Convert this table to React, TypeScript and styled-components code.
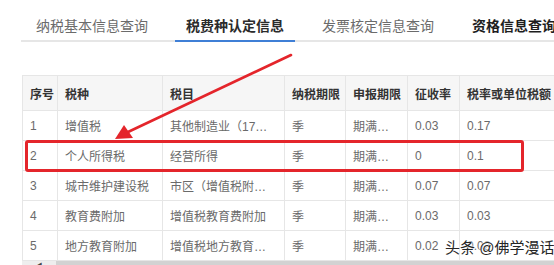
import React from 'react';
import styled, { createGlobalStyle } from 'styled-components';

const GlobalStyle = createGlobalStyle`
    html, body {
        margin: 0;
        padding: 0;
        background: #fff;
    }
    body {
        font-family: "Liberation Sans", "Noto Sans CJK SC", sans-serif;
        overflow: hidden;
    }
`;

interface TaxRow {
    no: string;
    kind: string;
    item: string;
    term: string;
    period: string;
    rate: string;
    amount: string;
}

const tabs = [
    { label: '纳税基本信息查询', weight: 'normal' as const },
    { label: '税费种认定信息', weight: 'active' as const },
    { label: '发票核定信息查询', weight: 'normal' as const },
    { label: '资格信息查询', weight: 'strong' as const },
];

const columns = [
    { title: '序号', width: 35 },
    { title: '税种', width: 105 },
    { title: '税目', width: 122 },
    { title: '纳税期限', width: 61 },
    { title: '申报期限', width: 62 },
    { title: '征收率', width: 52 },
    { title: '税率或单位税额', width: 112 },
];

const rows: TaxRow[] = [
    { no: '1', kind: '增值税', item: '其他制造业（17…', term: '季', period: '期满…', rate: '0.03', amount: '0.17' },
    { no: '2', kind: '个人所得税', item: '经营所得', term: '季', period: '期满…', rate: '0', amount: '0.1' },
    { no: '3', kind: '城市维护建设税', item: '市区（增值税附…', term: '季', period: '期满…', rate: '0.07', amount: '0.07' },
    { no: '4', kind: '教育费附加', item: '增值税教育费附加', term: '季', period: '期满…', rate: '0.03', amount: '0.03' },
    { no: '5', kind: '地方教育附加', item: '增值税地方教育…', term: '季', period: '期满…', rate: '0.02', amount: '0.02' },
];

const Page = styled.div`
    position: relative;
    width: 554px;
    height: 265px;
    overflow: hidden;
`;

const TabBar = styled.div`
    display: flex;
    gap: 8px;
    margin-left: 21px;
    height: 40px;
    border-bottom: 2px solid #e6e6e6;
`;

const Tab = styled.div<{ $weight: 'normal' | 'active' | 'strong' }>`
    position: relative;
    padding: 18px 15px 6px;
    font-size: 14px;
    line-height: 16px;
    white-space: nowrap;
    font-weight: ${p => (p.$weight === 'normal' ? 400 : 700)};
    color: ${p => (p.$weight === 'normal' ? '#6b6b6b' : p.$weight === 'active' ? '#2b2b2b' : '#1e1e1e')};

    &::after {
        display: ${p => (p.$weight === 'active' ? 'block' : 'none')};
        content: '';
        position: absolute;
        left: 4px;
        right: 4px;
        bottom: -2px;
        height: 2px;
        background: #3f7fd6;
    }
`;

const TableWrap = styled.div`
    margin: 33px 0 0 22px;
    width: 532px;
    overflow: hidden;
`;

const Table = styled.table`
    table-layout: fixed;
    border-collapse: collapse;
    width: 549px;
    font-size: 12px;
`;

const HeadCell = styled.th`
    height: 34px;
    padding: 0 0 0 7px;
    text-align: left;
    font-weight: 700;
    color: #333;
    background: #f6f6f6;
    border: 1px solid #e6e6e6;
    white-space: nowrap;
    overflow: hidden;
`;

const Cell = styled.td`
    height: 29px;
    padding: 0 0 0 7px;
    color: #6a6a6a;
    border: 1px solid #e6e6e6;
    white-space: nowrap;
    overflow: hidden;
`;

const ScrollTrack = styled.div`
    display: flex;
    align-items: center;
    margin-left: 22px;
    height: 10px;
    background: #eeeeee;
`;

const ScrollArrow = styled.span`
    width: 34px;
    font-size: 7px;
    color: #444;
    text-align: center;
    line-height: 10px;
`;

const ScrollThumb = styled.div`
    flex: 1;
    height: 10px;
    background: #d2d2d2;
`;

const Highlight = styled.div`
    position: absolute;
    left: 25px;
    top: 140px;
    width: 493px;
    height: 26px;
    border: 3px solid #e4252b;
    border-radius: 3px;
`;

const ArrowLayer = styled.svg`
    position: absolute;
    left: 0;
    top: 0;
    pointer-events: none;
`;

const Watermark = styled.div`
    position: absolute;
    left: 445px;
    top: 238px;
    font-size: 15px;
    line-height: 20px;
    color: #262626;
    white-space: nowrap;
    text-shadow: 0 0 2px #fff, 0 0 2px #fff, 0 0 3px #fff;
`;

export default function App() {
    return (
        <Page>
            <GlobalStyle />
            <TabBar>
                {tabs.map(t => (
                    <Tab key={t.label} $weight={t.weight}>{t.label}</Tab>
                ))}
            </TabBar>
            <TableWrap>
                <Table>
                    <colgroup>
                        {columns.map(c => (
                            <col key={c.title} style={{ width: c.width }} />
                        ))}
                    </colgroup>
                    <thead>
                        <tr>
                            {columns.map(c => (
                                <HeadCell key={c.title}>{c.title}</HeadCell>
                            ))}
                        </tr>
                    </thead>
                    <tbody>
                        {rows.map(r => (
                            <tr key={r.no}>
                                <Cell>{r.no}</Cell>
                                <Cell>{r.kind}</Cell>
                                <Cell>{r.item}</Cell>
                                <Cell>{r.term}</Cell>
                                <Cell>{r.period}</Cell>
                                <Cell>{r.rate}</Cell>
                                <Cell>{r.amount}</Cell>
                            </tr>
                        ))}
                    </tbody>
                </Table>
            </TableWrap>
            <ScrollTrack>
                <ScrollArrow>◀</ScrollArrow>
                <ScrollThumb />
            </ScrollTrack>
            <Highlight />
            <ArrowLayer width="554" height="265" viewBox="0 0 554 265">
                <path d="M291 55 L128 132" stroke="#e4252b" strokeWidth="2.6" strokeLinecap="round" />
                <polygon points="115,139 124,125 133,138" fill="#e4252b" />
            </ArrowLayer>
            <Watermark>头条 @佛学漫话</Watermark>
        </Page>
    );
}
